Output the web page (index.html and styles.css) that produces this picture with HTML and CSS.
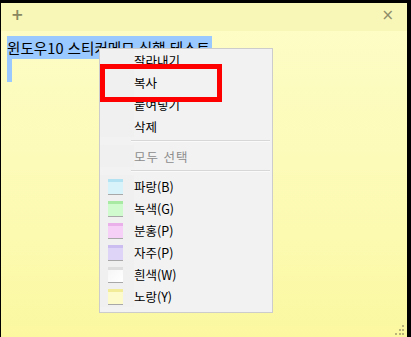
FILE: index.html
```html
<!DOCTYPE html>
<html lang="ko">
<head>
  <meta charset="UTF-8">
  <meta name="viewport" content="width=device-width, initial-scale=1.0">
  <title>스티커 메모</title>
  <link rel="stylesheet" href="styles.css">
</head>
<body>
  <div class="nota">
    <div class="barra-titulo">
      <span class="boton-mas">+</span>
      <span class="boton-cerrar">×</span>
    </div>
    <div class="contenido">
      <div class="linea"><span class="sel">윈도우10 스티커메모 실행 테스트</span></div>
      <div class="linea"><span class="sel vacio"></span></div>
    </div>
    <div class="agarre">
      <svg width="10" height="10" viewBox="0 0 10 10">
        <rect x="8" y="0" width="2" height="2" fill="#b8b47a"/>
        <rect x="5" y="4" width="2" height="2" fill="#b8b47a"/>
        <rect x="8" y="4" width="2" height="2" fill="#b8b47a"/>
        <rect x="1" y="8" width="2" height="2" fill="#b8b47a"/>
        <rect x="5" y="8" width="2" height="2" fill="#b8b47a"/>
        <rect x="8" y="8" width="2" height="2" fill="#b8b47a"/>
      </svg>
    </div>
  </div>

  <!-- menu contextual -->
  <div class="menu">
    <div class="item"><span class="icono"></span>잘라내기</div>
    <div class="item"><span class="icono"></span>복사</div>
    <div class="item"><span class="icono"></span>붙여넣기</div>
    <div class="item"><span class="icono"></span>삭제</div>
    <div class="separador"></div>
    <div class="item desactivado"><span class="icono"></span>모두 선택</div>
    <div class="separador"></div>
    <div class="item"><span class="icono"><i class="muestra azul"></i></span>파랑(B)</div>
    <div class="item"><span class="icono"><i class="muestra verde"></i></span>녹색(G)</div>
    <div class="item"><span class="icono"><i class="muestra rosa"></i></span>분홍(P)</div>
    <div class="item"><span class="icono"><i class="muestra morado"></i></span>자주(P)</div>
    <div class="item"><span class="icono"><i class="muestra blanco"></i></span>흰색(W)</div>
    <div class="item"><span class="icono"><i class="muestra amarillo"></i></span>노랑(Y)</div>
  </div>

  <div class="marco-rojo"></div>
</body>
</html>
```

FILE: styles.css
```css
body {
  margin: 0;
  width: 411px;
  height: 337px;
  overflow: hidden;
  background: #000;
  font-family: "Noto Sans CJK KR", "Noto Sans", sans-serif;
}

.nota {
  position: relative;
  margin: 3px 4px 0 1px;
  height: 334px;
  background: linear-gradient(180deg, #fdfdc8 0%, #fcfab0 70%, #fbf8a0 100%);
  display: flex;
  flex-direction: column;
}

.barra-titulo {
  height: 28px;
  background: #f9f7b7;
  display: flex;
  justify-content: space-between;
  align-items: center;
  padding: 0 13px 0 10px;
  color: #8a8860;
  font-family: "DejaVu Sans", sans-serif;
}

.boton-mas {
  font-size: 15px;
  font-weight: bold;
  line-height: 1;
  margin-top: -4px;
}

.boton-cerrar {
  font-size: 15px;
  line-height: 1;
  margin-top: -4px;
  color: #8f8d6a;
}

.contenido {
  padding: 5px 0 0 6px;
}

.linea {
  height: 23px;
  font-size: 14.6px;
  line-height: 23px;
  color: #000;
}

.sel {
  display: inline-block;
  background: #99c9ff;
  padding-right: 2px;
  height: 23px;
}

.sel.vacio {
  width: 5px;
  padding: 0;
  vertical-align: top;
}

.agarre {
  position: absolute;
  right: 3px;
  bottom: 2px;
  line-height: 0;
}

/* Menu */
.menu {
  position: absolute;
  left: 99px;
  top: 48px;
  width: 172px;
  padding: 0 0 5px 0;
  background: #f2f2f2;
  border: 1px solid #cccccc;
  font-size: 12.5px;
  color: #000;
}

.item {
  display: flex;
  align-items: center;
  height: 22px;
}

.icono {
  width: 34px;
  height: 22px;
  display: flex;
  align-items: center;
  justify-content: center;
  flex-shrink: 0;
  background: #f0f0f0;
}

.desactivado {
  color: #8d8d8d;
  letter-spacing: 1px;
}

.separador {
  height: 1px;
  background: #d7d7d7;
  margin: 3px 2px 4px 31px;
  box-shadow: 0 1px 0 #fafafa;
}

.muestra {
  display: block;
  width: 15px;
  height: 12px;
  margin-left: -4px;
  border-top: 3px solid;
  box-shadow: 0 1px 0 #a8a8a8;
}

.azul { background: #d8f3fa; border-color: #b3e3f2; }
.verde { background: #d0fbce; border-color: #a8eaa4; }
.rosa { background: #f6d0f6; border-color: #eab0ea; }
.morado { background: #ddd4f8; border-color: #cbbdf0; }
.blanco { background: linear-gradient(135deg, #f6f6f6, #ffffff); border-color: #dedede; }
.amarillo { background: #fdfbcb; border-color: #f2eb98; }

.marco-rojo {
  position: absolute;
  left: 100px;
  top: 64px;
  width: 112px;
  height: 28px;
  border: 5px solid #ff0000;
}
```
